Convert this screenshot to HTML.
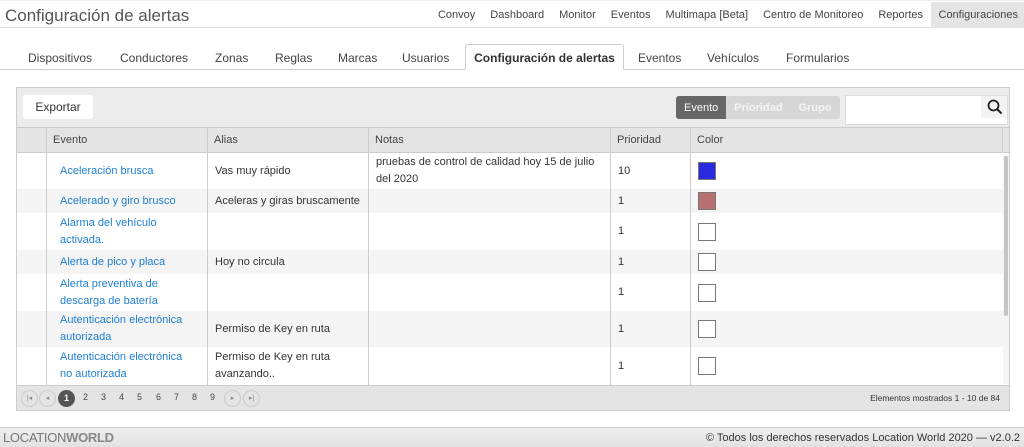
<!DOCTYPE html>
<html><head><meta charset="utf-8"><style>
*{box-sizing:border-box;margin:0;padding:0}
body{width:1024px;height:447px;background:#fff;font-family:"Liberation Sans",sans-serif;color:#333;position:relative;overflow:hidden;font-size:11px}
.abs{position:absolute}
#hdr{left:0;top:0;width:1024px;height:28px;border-bottom:1px solid #ddd;border-top:1px solid #eee}
#title{left:5px;top:5px;font-size:17px;color:#555}
#nav{right:0;top:1px;height:26px;display:flex;font-size:11px;color:#444}
#nav div{padding:0 7.5px;line-height:26px}
#nav .on{background:#e4e4e4;padding:0 6px 0 8px}
#tabs{left:0;top:44px;width:1024px;height:26px;border-bottom:1px solid #ccc}
.tab{top:7px;font-size:12px;color:#444}
#atab{left:465px;top:0;width:159px;height:26px;border:1px solid #ccc;border-bottom:1px solid #fff;background:#fff;border-radius:3px 3px 0 0;font-weight:bold;text-align:center;line-height:26px;font-size:12px;color:#333}
#grid{left:16px;top:87px;width:994px;height:324px;border:1px solid #ccc;background:#fff}
#tb{left:0;top:0;width:992px;height:40px;background:#ececec;border-bottom:1px solid #ccc}
#exp{left:6px;top:7px;width:70px;height:24px;background:#fff;border-radius:3px;text-align:center;line-height:24px;font-size:12px}
#seg{left:659px;top:8px;width:164px;height:23px;border-radius:3px;background:#d6d6d6;display:flex;align-items:center;overflow:hidden;font-size:11px;color:#f4f4f4;font-weight:bold}
#seg div{height:23px;display:flex;align-items:center;padding:0 8px}
#seg .s{background:#666;color:#fff;font-weight:normal}
#srch{left:828px;top:7px;width:163px;height:30px;background:#fff;border:1px solid #ddd}
#hrow{left:0;top:40px;width:992px;height:25px;background:#e4e4e4;border-bottom:1px solid #ccc}
.c{position:absolute;top:0;height:100%;border-left:1px solid #ccc;padding-left:6px}
.h .c{line-height:25px;font-size:11px;color:#444}
.row{position:absolute;left:0;width:986px}
.row .c{display:flex;align-items:center;padding-left:7px;line-height:17px;font-size:11px}
.row .c.e{padding-left:13px;color:#1f7fd2}
.sw{width:18px;height:18px;border:1px solid #777}
#pg{left:0;top:297px;width:992px;height:25px;background:#e4e4e4;border-top:1px solid #ccc}
.pb{position:absolute;top:4px;width:17px;height:17px;border-radius:50%;border:1px solid #ccc;font-size:7px;color:#888;text-align:center;line-height:15px}
.pn{position:absolute;top:6px;font-size:9px;color:#444}
#foot{left:0;top:427px;width:1024px;height:20px;background:linear-gradient(#eee,#e2e2e2);border-top:1px solid #ccc}
</style></head><body>
<div id="hdr" class="abs"><div id="title" class="abs">Configuración de alertas</div>
<div id="nav" class="abs"><div>Convoy</div><div>Dashboard</div><div>Monitor</div><div>Eventos</div><div>Multimapa [Beta]</div><div>Centro de Monitoreo</div><div>Reportes</div><div class="on">Configuraciones</div></div></div>
<div id="tabs" class="abs">
<div class="tab abs" style="left:28px">Dispositivos</div>
<div class="tab abs" style="left:120px">Conductores</div>
<div class="tab abs" style="left:215px">Zonas</div>
<div class="tab abs" style="left:275px">Reglas</div>
<div class="tab abs" style="left:338px">Marcas</div>
<div class="tab abs" style="left:402px">Usuarios</div>
<div id="atab" class="abs">Configuración de alertas</div>
<div class="tab abs" style="left:638px">Eventos</div>
<div class="tab abs" style="left:707px">Vehículos</div>
<div class="tab abs" style="left:786px">Formularios</div>
</div>
<div id="grid" class="abs">
<div id="tb" class="abs"><div id="exp" class="abs">Exportar</div>
<div id="seg" class="abs"><div class="s">Evento</div><div>Prioridad</div><div>Grupo</div></div>
<div id="srch" class="abs"><div class="abs" style="right:0;top:0;width:26px;height:22px;background:#f3f3f3"></div>
<svg class="abs" style="right:4px;top:3px" width="16" height="16" viewBox="0 0 16 16"><circle cx="6.5" cy="6.5" r="5" fill="none" stroke="#222" stroke-width="1.8"/><path d="M10 10l4.5 4.5" stroke="#222" stroke-width="2"/></svg></div></div>
<div id="hrow" class="abs h">
<div class="c" style="left:29px;width:162px">Evento</div><div class="c" style="left:190px;width:162px">Alias</div><div class="c" style="left:351px;width:242px">Notas</div><div class="c" style="left:593px;width:80px">Prioridad</div><div class="c" style="left:673px;width:313px">Color</div><div class="c" style="left:985px;width:7px"></div></div>
<div class="abs" style="left:986px;top:66px;width:6px;height:230px;background:#f4f4f4"><div style="margin:2px 0 0 1px;width:4px;height:160px;background:#c4c4c4;border-radius:2px"></div></div>

<div class="row" style="top:65px;height:36px"><div class="c" style="left:29px;width:162px;padding-left:13px;color:#1f7fd2">Aceleración brusca</div><div class="c" style="left:190px;width:162px">Vas muy rápido</div><div class="c" style="left:351px;width:242px">pruebas de control de calidad hoy 15 de julio del 2020</div><div class="c" style="left:593px;width:80px">10</div><div class="c" style="left:673px;width:313px"><div class="sw" style="background:#2a2be0"></div></div></div>
<div class="row" style="top:101px;height:24px;background:#f4f4f4"><div class="c e" style="left:29px;width:162px">Acelerado y giro brusco</div><div class="c" style="left:190px;width:162px">Aceleras y giras bruscamente</div><div class="c" style="left:351px;width:242px"></div><div class="c" style="left:593px;width:80px">1</div><div class="c" style="left:673px;width:313px"><div class="sw" style="background:#b87070"></div></div></div>
<div class="row" style="top:125px;height:37px"><div class="c e" style="left:29px;width:162px">Alarma del vehículo<br>activada.</div><div class="c" style="left:190px;width:162px"></div><div class="c" style="left:351px;width:242px"></div><div class="c" style="left:593px;width:80px">1</div><div class="c" style="left:673px;width:313px"><div class="sw"></div></div></div>
<div class="row" style="top:162px;height:24px;background:#f4f4f4"><div class="c e" style="left:29px;width:162px">Alerta de pico y placa</div><div class="c" style="left:190px;width:162px">Hoy no circula</div><div class="c" style="left:351px;width:242px"></div><div class="c" style="left:593px;width:80px">1</div><div class="c" style="left:673px;width:313px"><div class="sw" style="background:#fff"></div></div></div>
<div class="row" style="top:186px;height:37px"><div class="c e" style="left:29px;width:162px">Alerta preventiva de<br>descarga de batería</div><div class="c" style="left:190px;width:162px"></div><div class="c" style="left:351px;width:242px"></div><div class="c" style="left:593px;width:80px">1</div><div class="c" style="left:673px;width:313px"><div class="sw"></div></div></div>
<div class="row" style="top:223px;height:36px;background:#f4f4f4"><div class="c e" style="left:29px;width:162px">Autenticación electrónica<br>autorizada</div><div class="c" style="left:190px;width:162px">Permiso de Key en ruta</div><div class="c" style="left:351px;width:242px"></div><div class="c" style="left:593px;width:80px">1</div><div class="c" style="left:673px;width:313px"><div class="sw" style="background:#fff"></div></div></div>
<div class="row" style="top:259px;height:38px"><div class="c e" style="left:29px;width:162px">Autenticación electrónica<br>no autorizada</div><div class="c" style="left:190px;width:162px">Permiso de Key en ruta<br>avanzando..</div><div class="c" style="left:351px;width:242px"></div><div class="c" style="left:593px;width:80px">1</div><div class="c" style="left:673px;width:313px"><div class="sw"></div></div></div>

<div id="pg" class="abs">
<div class="pb" style="left:4px">|◂</div><div class="pb" style="left:22px">◂</div>
<div class="pb" style="left:41px;background:#555;border-color:#555;color:#fff;font-size:9px;font-weight:bold">1</div>
<div class="pn" style="left:66px">2</div><div class="pn" style="left:84px">3</div><div class="pn" style="left:102px">4</div><div class="pn" style="left:120px">5</div><div class="pn" style="left:139px">6</div><div class="pn" style="left:157px">7</div><div class="pn" style="left:175px">8</div><div class="pn" style="left:193px">9</div>
<div class="pb" style="left:207px">▸</div><div class="pb" style="left:226px">▸|</div>
<div class="abs" style="right:9px;top:7px;font-size:8.5px;color:#333">Elementos mostrados 1 - 10 de 84</div></div>
</div>
<div id="foot" class="abs"><div class="abs" style="left:3px;top:2px;font-size:13px;color:#777;letter-spacing:-0.3px">LOCATION<b style="color:#888">WORLD</b></div>
<div class="abs" style="right:4px;top:4px;font-size:11px;color:#333">© Todos los derechos reservados Location World 2020 — v2.0.2</div></div>
</body></html>
